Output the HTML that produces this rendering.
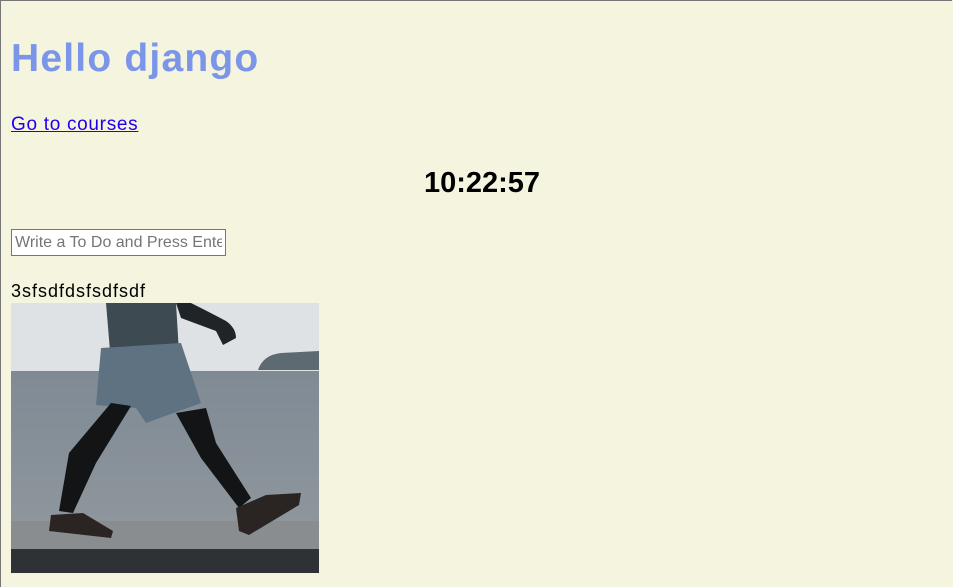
<!DOCTYPE html>
<html><head><meta charset="utf-8"><style>
html,body{margin:0;padding:0}
body{width:951px;height:586px;background:#f4f4df;border-top:1px solid #767676;border-left:1px solid #767676;position:relative;overflow:hidden;font-family:"Liberation Sans","Noto Sans CJK KR",sans-serif}
.a{position:absolute;white-space:nowrap}
h1{margin:0;font-size:39px;font-weight:bold;color:#7b96e8;left:10px;top:35px;line-height:46px;letter-spacing:1.2px}
a{color:#2200ee;font-size:19px;left:10px;top:112px;line-height:24px;letter-spacing:0.7px}
.clk{font-size:29px;font-weight:bold;left:0;width:962px;text-align:center;top:164px;line-height:36px;color:#000}
input{position:absolute;left:10px;top:228px;width:207px;height:25px;box-sizing:content-box;padding:0 3px;border:1px solid #767676;background:#fff;font-size:16px;font-family:"Liberation Sans",sans-serif;margin:0}
input::placeholder{color:#757575}
.t{font-size:18px;left:10px;top:279px;line-height:22px;color:#000;letter-spacing:1px}
svg{position:absolute;left:10px;top:302px}
</style></head><body>
<h1 class="a">Hello django</h1>
<a class="a" href="#">Go to courses</a>
<div class="a clk">10:22:57</div>
<input placeholder="Write a To Do and Press Enter">
<div class="a t">3sfsdfdsfsdfsdf</div>
<svg width="308" height="270" viewBox="0 0 308 270">
<defs><linearGradient id="sea" x1="0" y1="0" x2="0" y2="1"><stop offset="0" stop-color="#7f8a94"/><stop offset="1" stop-color="#8e969c"/></linearGradient></defs>
<rect width="308" height="70" fill="#dfe2e4"/>
<path d="M247 67 Q252 52 270 50 L308 48 L308 67Z" fill="#5e6a72"/>
<rect y="68" width="308" height="152" fill="url(#sea)"/>
<rect y="218" width="308" height="30" fill="#8a8d8f"/>
<rect y="246" width="308" height="24" fill="#2e3236"/>
<path d="M165 0 L180 0 Q200 10 215 18 Q225 25 225 35 L212 42 L205 28 L170 15Z" fill="#1e2428"/>
<path d="M95 0 L165 0 L168 50 L100 60Z" fill="#3d4a52"/>
<path d="M90 45 L170 40 L190 100 L135 120 L125 105 L85 102Z" fill="#5f7282"/>
<path d="M100 100 L120 103 L85 160 L62 210 L48 208 L58 150Z" fill="#121416"/>
<path d="M165 110 L195 105 L205 140 L240 195 L228 205 L190 155Z" fill="#121416"/>
<path d="M40 212 L72 210 L102 228 L100 235 L38 228Z" fill="#2a2422"/>
<path d="M225 205 L255 192 L290 190 L288 202 L238 232 L228 228Z" fill="#2a2422"/>
</svg>
</body></html>
